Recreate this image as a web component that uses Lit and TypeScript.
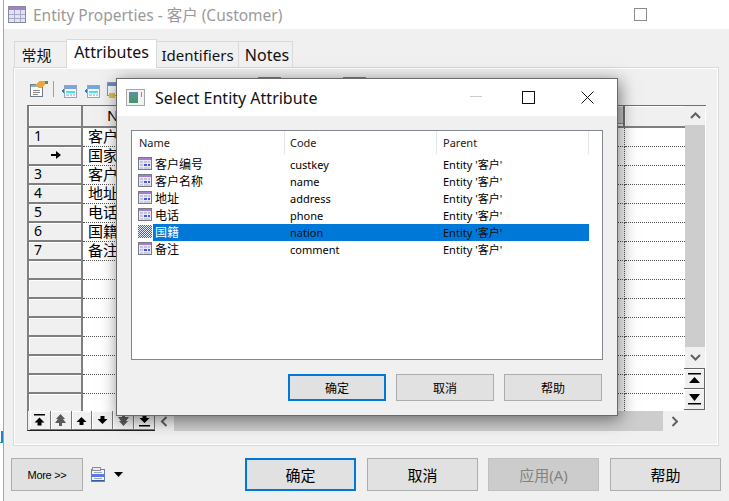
import { LitElement, css, html, svg } from 'lit'
import { customElement } from 'lit/decorators.js'

const gridRows = ['1', '', '3', '4', '5', '6', '7', '', '', '', '', '', '', '', '']
const gridNames = ['客户', '国家', '客户', '地址', '电话', '国籍', '备注']

const attributes = [
  { name: '客户编号', code: 'custkey' },
  { name: '客户名称', code: 'name' },
  { name: '地址', code: 'address' },
  { name: '电话', code: 'phone' },
  { name: '国籍', code: 'nation', selected: true },
  { name: '备注', code: 'comment' },
]

const arrowUp = 'M5 1 L10 6 H7 V9 H3 V6 H0 Z'
const arrowDown = 'M3 1 H7 V4 H10 L5 9 L0 4 H3 Z'

const navIcon = (kind: string, color = '#000') => svg`
  <svg width="13" height="13" viewBox="0 0 13 13">
    ${kind === 'top'
      ? svg`<rect x="1" y="0" width="11" height="1.5" fill=${color}/><path transform="translate(1.5 2.5)" d=${arrowUp} fill=${color}/>`
      : ''}
    ${kind === 'pageup'
      ? svg`<path d="M6.5 0 L11 5 H9 L12 9 H8 V12 H5 V9 H1 L4 5 H2 Z" fill=${color}/>`
      : ''}
    ${kind === 'up' ? svg`<path transform="translate(1.5 2)" d=${arrowUp} fill=${color}/>` : ''}
    ${kind === 'down' ? svg`<path transform="translate(1.5 1)" d=${arrowDown} fill=${color}/>` : ''}
    ${kind === 'pagedown'
      ? svg`<path d="M5 0 H8 V3 H12 L9 7 H11 L6.5 12 L2 7 H4 L1 3 H5 Z" fill=${color}/>`
      : ''}
    ${kind === 'bottom'
      ? svg`<path transform="translate(1.5 0)" d=${arrowDown} fill=${color}/><rect x="1" y="11" width="11" height="1.5" fill=${color}/>`
      : ''}
  </svg>
`

const chevron = (points: string) => svg`
  <svg width="11" height="11" viewBox="0 0 11 11">
    <polyline points=${points} fill="none" stroke="#606060" stroke-width="2"/>
  </svg>
`

const attributeIcon = (selected = false) => svg`
  <svg class="attr-icon" width="14" height="14" viewBox="0 0 14 14" shape-rendering="crispEdges">
    <defs>
      <pattern id="dither" width="2" height="2" patternUnits="userSpaceOnUse">
        <rect width="2" height="2" fill="#e6eef8"/>
        <rect width="1" height="1" fill="#0078d7"/>
        <rect x="1" y="1" width="1" height="1" fill="#0078d7"/>
      </pattern>
    </defs>
    ${selected
      ? svg`<rect width="14" height="13" fill="url(#dither)"/>`
      : svg`
        <rect x="0.5" y="0.5" width="13" height="12" fill="#e8eaf4" stroke="#7a7a86"/>
        <rect x="1" y="1" width="12" height="2" fill="#a67ed0"/>
        <rect x="2" y="4" width="3" height="2" fill="#c0c4e0"/>
        <rect x="6" y="4" width="3" height="2" fill="#c0c4e0"/>
        <rect x="10" y="4" width="2" height="2" fill="#c0c4e0"/>
        <rect x="2" y="7" width="3" height="2" fill="#c0c4e0"/>
        <rect x="6" y="7" width="3" height="2" fill="#4a54e4"/>
        <rect x="10" y="7" width="2" height="2" fill="#4a54e4"/>
        <rect x="2" y="10" width="3" height="2" fill="#ccd0e2"/>
        <rect x="6" y="10" width="6" height="2" fill="#ccd0e2"/>
      `}
  </svg>
`

const tableArrowIcon = () => svg`
  <svg width="16" height="14" viewBox="0 0 16 14" shape-rendering="crispEdges">
    <path d="M0 6 L3 4 V9 Z" fill="#1c7ed6"/>
    <rect x="3.5" y="0.5" width="12" height="12" fill="#f6f8fc" stroke="#98a4ba"/>
    <rect x="4" y="1" width="11" height="3" fill="#78a4e0"/>
    <rect x="5" y="6" width="9" height="2" fill="#40e6e6"/>
    <rect x="5" y="9" width="3" height="2" fill="#c4cbdc"/>
    <rect x="9" y="9" width="2" height="2" fill="#c4cbdc"/>
    <rect x="12" y="9" width="2" height="2" fill="#c4cbdc"/>
  </svg>
`

@customElement('app-root')
export class AppRoot extends LitElement {
  render() {
    return html`
      <div class="strip"><span class="sliver"></span></div>
      <div class="window">
        <div class="titlebar">
          <svg class="title-icon" width="18" height="18" viewBox="0 0 18 18" shape-rendering="crispEdges">
            <rect x="0.5" y="0.5" width="17" height="16" fill="#dfe3f4" stroke="#8a8a9c"/>
            <rect x="1" y="1" width="16" height="3" fill="#a67ed0"/>
            <path d="M6 4 V16 M12 4 V16 M1 8 H17 M1 12 H17" stroke="#a8a8c8"/>
          </svg>
          <span class="title">Entity Properties - 客户 (Customer)</span>
          <span class="max-button"></span>
        </div>

        <div class="body">
          <div class="tabs">
            <div class="tab">常规</div>
            <div class="tab active">Attributes</div>
            <div class="tab">Identifiers</div>
            <div class="tab">Notes</div>
          </div>

          <div class="panel">
            <div class="toolbar">
              <svg width="18" height="17" viewBox="0 0 18 17" shape-rendering="crispEdges">
                <rect x="0.5" y="4.5" width="12" height="12" fill="#fff" stroke="#707a8a"/>
                <rect x="1" y="5" width="11" height="2" fill="#8fb0d8"/>
                <path d="M3 10 H10 M3 12 H10 M3 14 H8" stroke="#8a8a8a"/>
                <path d="M5 5 L10 1 H15 L16 4 L11 8 L8 8 Z" fill="#e8a83c"/>
                <rect x="15" y="1" width="3" height="3" fill="#3f9f4a"/>
              </svg>
              <span class="tool-sep"></span>
              <span class="tool-icon">${tableArrowIcon()}</span>
              <span class="tool-icon">${tableArrowIcon()}</span>
              <svg class="tool-icon" width="16" height="17" viewBox="0 0 16 17" shape-rendering="crispEdges">
                <rect x="0.5" y="0.5" width="13" height="13" fill="#f4f6fa" stroke="#8a93a8"/>
                <rect x="1" y="1" width="12" height="3" fill="#5b8fd0"/>
                <path d="M2 16 H8 V11 H2 Z" fill="#e2c23c"/>
              </svg>
              <span class="peek first"></span>
              <span class="peek"></span>
            </div>

            <div class="grid">
              <div class="grid-top">
                <div class="grid-main">
                  <div class="grid-head">
                    <div class="corner"></div>
                    <div class="head-name">
                      Name
                      <span class="head-button"></span>
                    </div>
                    <div class="head-extra"></div>
                  </div>
                  <div class="grid-rows">
                    ${gridRows.map(
                      (num, i) => html`
                        <div class="grid-row">
                          <div class="row-head">
                            ${i === 1
                              ? html`<svg class="row-pointer" width="10" height="8" viewBox="0 0 10 8">
                                  <path d="M0 3 H5 V0 L10 4 L5 8 V5 H0 Z" fill="#000" />
                                </svg>`
                              : num}
                          </div>
                          <div class="cell-name">${gridNames[i] ?? ''}</div>
                          <div class="cell-extra"></div>
                        </div>
                      `,
                    )}
                  </div>
                </div>
                <div class="vscroll">
                  <div class="arrow-v first">${chevron('1,8 5.5,3.5 10,8')}</div>
                  <div class="thumb-v"></div>
                  <div class="arrow-v">${chevron('1,3 5.5,7.5 10,3')}</div>
                  <div class="move-button top">
                    <svg width="13" height="12" viewBox="0 0 13 12"><rect y="0" width="13" height="1.5" /><path d="M6.5 4 L12 10 H1 Z" /></svg>
                  </div>
                  <div class="move-button">
                    <svg width="13" height="12" viewBox="0 0 13 12"><path d="M1 1 H12 L6.5 8 Z" /><rect y="10" width="13" height="1.5" /></svg>
                  </div>
                </div>
              </div>
              <div class="grid-bottom">
                <div class="nav">
                  <button class="nav-button">${navIcon('top')}</button>
                  <button class="nav-button">${navIcon('pageup', '#5a5a5a')}</button>
                  <button class="nav-button">${navIcon('up')}</button>
                  <button class="nav-button">${navIcon('down')}</button>
                  <button class="nav-button">${navIcon('pagedown', '#5a5a5a')}</button>
                  <button class="nav-button">${navIcon('bottom')}</button>
                </div>
                <div class="arrow-h">${chevron('7.5,1 3,5.5 7.5,10')}</div>
                <div class="thumb-h"></div>
                <div class="arrow-h end">${chevron('3.5,1 8,5.5 3.5,10')}</div>
              </div>
            </div>
          </div>

          <div class="footer">
            <button class="btn more">More &gt;&gt;</button>
            <svg class="report-icon" width="15" height="15" viewBox="0 0 15 15" shape-rendering="crispEdges">
              <rect x="0.5" y="2.5" width="13" height="12" fill="#f2f4f8" stroke="#6a82aa"/>
              <rect x="1.5" y="0.5" width="8" height="3" fill="#e8eaee" stroke="#8a8f98"/>
              <path d="M3 5.5 H11" stroke="#a0a8b8"/>
              <rect x="1" y="7" width="12" height="3" fill="#5a78e6"/>
              <path d="M3 11.5 H11" stroke="#a0a8b8"/>
              <rect x="1" y="13" width="12" height="1" fill="#3a5aa8"/>
            </svg>
            <svg class="caret" width="9" height="5" viewBox="0 0 9 5"><path d="M0 0 H9 L4.5 5 Z" fill="#000" /></svg>
            <div class="actions">
              <button class="btn wide default">确定</button>
              <button class="btn wide">取消</button>
              <button class="btn wide disabled">应用(A)</button>
              <button class="btn wide">帮助</button>
            </div>
          </div>
        </div>
      </div>

      <div class="dialog">
        <div class="dialog-title">
          <svg width="19" height="17" viewBox="0 0 19 17" shape-rendering="crispEdges">
            <defs>
              <linearGradient id="dlg" x1="0" y1="0" x2="0" y2="1">
                <stop offset="0" stop-color="#5f8f9f" />
                <stop offset="1" stop-color="#3f9a6a" />
              </linearGradient>
            </defs>
            <rect x="0.5" y="0.5" width="18" height="16" fill="#f2f2f2" stroke="#a8a8a8" />
            <rect x="3" y="3" width="9" height="11" fill="url(#dlg)" />
            <rect x="15" y="3" width="1" height="5" fill="#6f9f9f" />
          </svg>
          <span class="dialog-name">Select Entity Attribute</span>
          <span class="dlg-min"></span>
          <span class="dlg-max"></span>
          <svg class="dlg-close" width="13" height="13" viewBox="0 0 13 13">
            <path d="M0.5 0.5 L12.5 12.5 M12.5 0.5 L0.5 12.5" stroke="#111" stroke-width="1" fill="none" />
          </svg>
        </div>
        <div class="dialog-body">
          <div class="list">
            <div class="list-head">
              <div class="col-name">Name</div>
              <div class="col-code">Code</div>
              <div class="col-parent">Parent</div>
            </div>
            ${attributes.map(
              (a) => html`
                <div class="list-row">
                  <div class="icon-slot">${attributeIcon(a.selected)}</div>
                  <div class="row-fill ${a.selected ? 'selected' : ''}">
                    <span class="val-name">${a.name}</span>
                    <span class="val-code">${a.code}</span>
                    <span class="val-parent">Entity '客户'</span>
                  </div>
                </div>
              `,
            )}
          </div>
          <div class="dialog-actions">
            <button class="btn small default">确定</button>
            <button class="btn small">取消</button>
            <button class="btn small">帮助</button>
          </div>
        </div>
      </div>
    `
  }

  static styles = css`
    :host {
      display: flex;
      position: relative;
      width: 729px;
      height: 501px;
      overflow: hidden;
      background: #fff;
      font-family: 'Noto Sans', 'Noto Sans CJK SC', sans-serif;
      color: #000;
    }

    .strip {
      width: 3px;
      flex: none;
      padding-top: 431px;
      box-sizing: border-box;
    }

    .sliver {
      display: block;
      width: 3px;
      height: 11px;
      background: linear-gradient(90deg, #fff 30%, #2a7fc0 30%);
      border-bottom: 1px solid #20a0a0;
    }

    .window {
      flex: 1;
      display: flex;
      flex-direction: column;
      background: #f0f0f0;
      border-left: 1px solid #a6a6a6;
    }

    .titlebar {
      height: 29px;
      flex: none;
      display: flex;
      align-items: center;
      background: #fff;
      padding-left: 4px;
    }

    .title-icon {
      margin-right: 7px;
    }

    .title {
      font-size: 15.5px;
      color: #9a9a9a;
      white-space: nowrap;
      margin-top: -1px;
    }

    .max-button {
      width: 11px;
      height: 11px;
      border: 1px solid #8c8c8c;
      margin-left: auto;
      margin-right: 82px;
    }

    .body {
      flex: 1;
      padding: 10px 0 0 9px;
    }

    .tabs {
      display: flex;
      align-items: flex-end;
      height: 29px;
      margin-left: 2px;
      position: relative;
      z-index: 1;
      margin-bottom: -1px;
    }

    .tab {
      box-sizing: border-box;
      height: 26px;
      line-height: 27px;
      margin-bottom: 1px;
      border: 1px solid #d9d9d9;
      border-bottom: none;
      margin-left: -1px;
      background: #f0f0f0;
      font-size: 16px;
      text-align: center;
      color: #111;
    }

    .tab:nth-child(1) {
      width: 53px;
      padding-right: 8px;
      font-size: 15px;
    }

    .tab:nth-child(2) {
      width: 91px;
    }

    .tab:nth-child(3) {
      width: 83px;
      font-size: 15px;
    }

    .tab:nth-child(4) {
      width: 55px;
      padding-left: 3px;
    }

    .tab.active {
      height: 29px;
      line-height: 25px;
      margin-bottom: 0;
      background: #fff;
    }

    .panel {
      box-sizing: border-box;
      width: 706px;
      height: 379px;
      border: 1px solid #d9d9d9;
      box-shadow: inset 1px 1px 0 #fff, inset -1px -1px 0 #fff;
      padding-left: 13px;
    }

    .toolbar {
      height: 37px;
      padding: 12px 0 0 3px;
      box-sizing: border-box;
      display: flex;
      align-items: flex-start;
    }

    .tool-sep {
      width: 1px;
      height: 16px;
      background: #a0a0a0;
      margin: 1px 7px 0 5px;
    }

    .tool-icon {
      display: block;
      margin: 2px 7px 0 0;
    }

    .peek {
      width: 23px;
      height: 3px;
      margin: -3px 0 0 62px;
      background: #5a8ab0;
    }

    .peek.first {
      margin-left: 128px;
    }

    .grid {
      width: 679px;
      height: 326px;
      display: flex;
      flex-direction: column;
      background: #f0f0f0;
    }

    .grid-top {
      display: flex;
      height: 306px;
      border-top: 1px solid #6f6f6f;
    }

    .grid-main {
      width: 658px;
      flex: none;
      overflow: hidden;
    }

    .grid-head {
      display: flex;
      height: 22px;
      box-sizing: border-box;
    }

    .corner {
      box-sizing: border-box;
      width: 56px;
      flex: none;
      background: #f0f0f0;
      border-left: 2px solid #7f7f7f;
      border-right: 2px solid #7f7f7f;
      border-bottom: 2px solid #7f7f7f;
      box-shadow: inset 1px 1px 0 #fff;
    }

    .head-name {
      position: relative;
      box-sizing: border-box;
      width: 542px;
      flex: none;
      padding-left: 24px;
      font-size: 15px;
      line-height: 19px;
      border-bottom: 2px solid #7f7f7f;
      border-right: 2px solid #6f6f6f;
      background: #f0f0f0;
    }

    .head-button {
      position: absolute;
      right: 0;
      top: 1px;
      width: 22px;
      height: 16px;
      background: #c8c8c8;
      border-bottom: 1px solid #8a8a8a;
    }

    .head-extra {
      flex: 1;
      background: #f0f0f0;
      border-bottom: 2px solid #7f7f7f;
      box-shadow: inset 1px 1px 0 #fff;
    }

    .grid-rows {
      height: 283px;
      overflow: hidden;
    }

    .grid-row {
      display: flex;
      height: 19px;
    }

    .row-head {
      box-sizing: border-box;
      width: 56px;
      flex: none;
      background: #f0f0f0;
      border-left: 2px solid #7f7f7f;
      border-right: 2px solid #7f7f7f;
      border-bottom: 2px solid #7f7f7f;
      box-shadow: inset 1px 1px 0 #fff;
      padding: 0 0 1px 5px;
      font-size: 14px;
      line-height: 16px;
      display: flex;
      align-items: center;
    }

    .row-pointer {
      margin-left: 17px;
    }

    .cell-name {
      box-sizing: border-box;
      width: 542px;
      flex: none;
      background: #fff;
      padding-left: 5px;
      font-size: 15px;
      line-height: 17px;
      border-bottom: 1px dotted #555;
      border-right: 1px dotted #555;
      overflow: hidden;
    }

    .cell-extra {
      flex: 1;
      background: #fff;
      border-bottom: 1px dotted #555;
    }

    .vscroll {
      width: 21px;
      flex: none;
      display: flex;
      flex-direction: column;
      box-shadow: inset -1px 0 0 #fff;
    }

    .arrow-v {
      height: 21px;
      flex: none;
      display: flex;
      align-items: center;
      justify-content: center;
    }

    .arrow-v.first {
      height: 19px;
    }

    .thumb-v {
      height: 222px;
      flex: none;
      margin-right: 1px;
      background: #cdcdcd;
    }

    .move-button {
      box-sizing: border-box;
      width: 21px;
      height: 21px;
      flex: none;
      margin-left: -1px;
      background: #f0f0f0;
      border-right: 1px solid #666;
      border-bottom: 1px solid #666;
      box-shadow: inset 1px 1px 0 #fff;
      display: flex;
      align-items: center;
      justify-content: center;
    }

    .move-button.top {
      border-top: 1px solid #666;
    }

    .grid-bottom {
      display: flex;
      height: 20px;
      padding-right: 21px;
    }

    .nav {
      display: flex;
      box-sizing: border-box;
      width: 128px;
      flex: none;
      padding-left: 2px;
      border-left: 1px solid #7f7f7f;
      border-bottom: 1px solid #222;
    }

    .nav-button {
      width: 21px;
      padding: 0;
      border: none;
      border-right: 1px solid #7a7a7a;
      border-bottom: 1px solid #7a7a7a;
      background: #f0f0f0;
      box-shadow: inset 1px 1px 0 #fff;
      display: flex;
      align-items: center;
      justify-content: center;
    }

    .arrow-h {
      width: 19px;
      flex: none;
      display: flex;
      align-items: center;
      justify-content: center;
    }

    .arrow-h.end {
      width: 22px;
    }

    .thumb-h {
      flex: 1;
      background: #cdcdcd;
    }

    .footer {
      display: flex;
      align-items: center;
      height: 33px;
      margin-top: 12px;
      margin-left: -2px;
    }

    .btn {
      box-sizing: border-box;
      padding: 0;
      background: #e1e1e1;
      border: 1px solid #adadad;
      font-family: inherit;
      color: #000;
    }

    .btn.default {
      border: 2px solid #0078d7;
    }

    .more {
      width: 72px;
      height: 33px;
      font-family: 'Liberation Sans', sans-serif;
      font-size: 11px;
      letter-spacing: -0.3px;
    }

    .report-icon {
      margin-left: 8px;
    }

    .caret {
      margin-left: 8px;
    }

    .actions {
      display: flex;
      gap: 11px;
      flex: none;
      margin-left: auto;
      margin-right: 8px;
    }

    .wide {
      width: 111px;
      height: 33px;
      font-size: 15px;
    }

    .wide:nth-child(3) {
      margin-left: -1px;
    }

    .disabled {
      background: #cccccc;
      border-color: #bfbfbf;
      color: #838383;
    }

    .dialog {
      position: absolute;
      left: 116px;
      top: 78px;
      box-sizing: border-box;
      width: 502px;
      height: 338px;
      display: flex;
      flex-direction: column;
      background: #f0f0f0;
      border: 1px solid #6a6a6a;
      box-shadow: 2px 3px 16px rgba(0, 0, 0, 0.5);
    }

    .dialog-title {
      height: 37px;
      flex: none;
      display: flex;
      align-items: center;
      background: #fff;
      padding-left: 9px;
    }

    .dialog-name {
      margin-left: 10px;
      font-size: 16px;
      color: #111;
    }

    .dlg-min {
      position: absolute;
      left: 353px;
      top: 17px;
      width: 12px;
      height: 1px;
      background: #ccc;
    }

    .dlg-max {
      position: absolute;
      left: 405px;
      top: 12px;
      width: 11px;
      height: 11px;
      border: 1px solid #111;
    }

    .dlg-close {
      position: absolute;
      left: 464px;
      top: 12px;
    }

    .dialog-body {
      flex: 1;
      padding: 14px 15px 0 14px;
    }

    .list {
      box-sizing: border-box;
      width: 472px;
      height: 230px;
      background: #fff;
      border: 1px solid #828790;
      font-size: 11px;
    }

    .list-head {
      display: flex;
      height: 25px;
      color: #222;
    }

    .list-head > div {
      box-sizing: border-box;
      height: 23px;
      line-height: 24px;
      border-right: 1px solid #e5e5e5;
    }

    .col-name {
      width: 153px;
      padding-left: 7px;
    }

    .col-code {
      width: 152px;
      padding-left: 5px;
    }

    .col-parent {
      width: 152px;
      padding-left: 6px;
    }

    .list-row {
      display: flex;
      height: 17px;
      align-items: stretch;
    }

    .icon-slot {
      width: 21px;
      flex: none;
      padding-left: 6px;
      box-sizing: border-box;
    }

    .attr-icon {
      display: block;
      margin-top: 1px;
    }

    .row-fill {
      display: flex;
      width: 436px;
      flex: none;
      line-height: 17px;
    }

    .row-fill.selected {
      background: #0078d7;
      color: #fff;
    }

    .row-fill.selected .val-parent,
    .row-fill.selected .val-code {
      color: #111;
    }

    .val-name {
      width: 132px;
      flex: none;
      padding-left: 2px;
      box-sizing: border-box;
      font-size: 12px;
      line-height: 18px;
    }

    .val-code {
      width: 158px;
      flex: none;
      padding-left: 5px;
      box-sizing: border-box;
    }

    .val-parent {
      flex: 1;
    }

    .dialog-actions {
      display: flex;
      justify-content: flex-end;
      gap: 10px;
      margin-top: 14px;
    }

    .small {
      width: 98px;
      height: 27px;
      font-size: 12px;
    }
  `
}

declare global {
  interface HTMLElementTagNameMap {
    'app-root': AppRoot
  }
}
